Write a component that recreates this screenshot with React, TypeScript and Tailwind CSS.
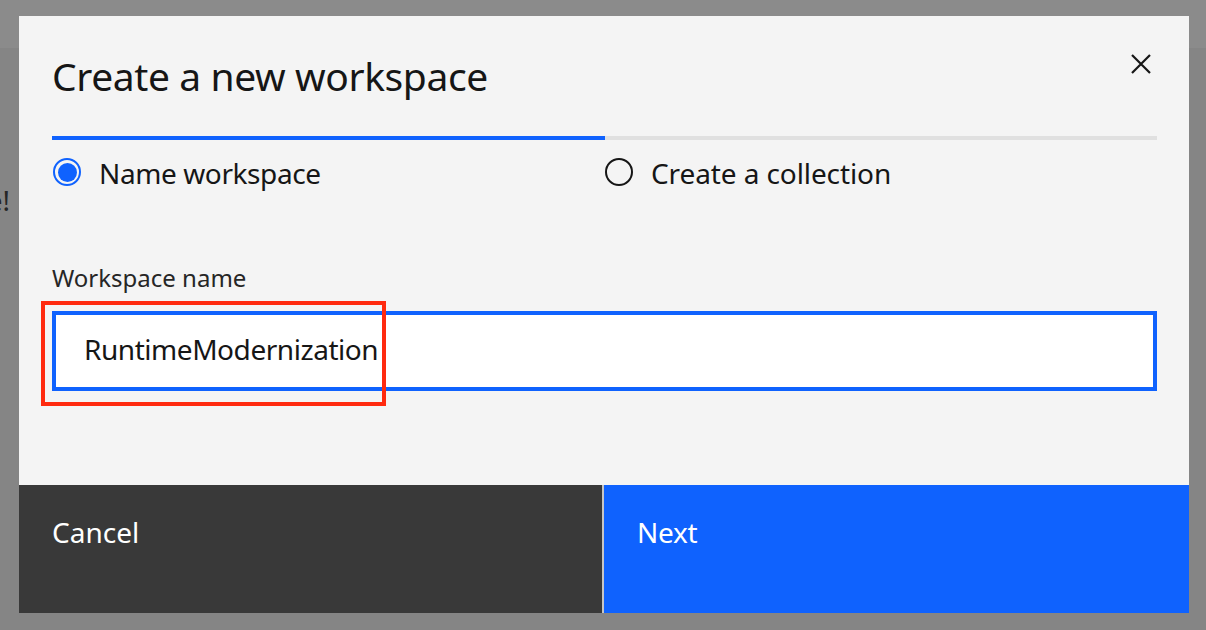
export default function App() {
  return (
    <div className="relative w-[1206px] h-[630px] overflow-hidden bg-[#858585] font-['Noto_Sans',sans-serif]">
      {/* page behind overlay */}
      <div className="h-12 bg-[#8b8b8b]" />
      <div className="flex">
        <div className="ml-[-120px] mt-[134px] w-[130px] text-right text-[28px] leading-[36px] text-[#262626]">
          ive!
        </div>
      </div>

      {/* modal */}
      <div className="absolute left-[19px] top-[16px] w-[1170px] h-[597px] bg-[#f4f4f4] flex flex-col text-[#161616]">
        <div className="relative pl-[33px] pr-[32px] pt-[36px]">
          <h2 className="text-[39px] leading-[48px] font-normal tracking-[-0.4px]">Create a new workspace</h2>
          <button className="absolute right-[38px] top-[38px] w-5 h-5 flex items-center justify-center">
            <svg width="20" height="20" viewBox="0 0 20 20" fill="none">
              <path d="M1 1 L19 19 M19 1 L1 19" stroke="#161616" strokeWidth="2.2" />
            </svg>
          </button>
        </div>

        <div className="pl-[33px] pr-[32px] mt-[36px] flex">
          <div className="flex-1 h-1 bg-[#0f62fe]" />
          <div className="flex-1 h-1 bg-[#e0e0e0]" />
        </div>

        <div className="pl-[34px] pr-[32px] mt-[17px] flex">
          <div className="flex-1 flex items-center gap-[18px]">
            <span className="w-[28px] h-[28px] rounded-full border-2 border-[#0f62fe] flex items-center justify-center">
              <span className="w-[19px] h-[19px] rounded-full bg-[#0f62fe]" />
            </span>
            <span className="text-[28px] leading-[28px] tracking-[-0.4px] pt-[2px]">Name workspace</span>
          </div>
          <div className="flex-1 flex items-center gap-[18px]">
            <span className="w-[28px] h-[28px] rounded-full border-2 border-[#161616]" />
            <span className="text-[28px] leading-[28px] tracking-[-0.1px] pt-[2px]">Create a collection</span>
          </div>
        </div>

        <div className="pl-[33px] pr-[32px] mt-[75px]">
          <div className="text-[24px] leading-[32px] text-[#262626]">Workspace name</div>
          <div className="relative mt-[17px]">
            <div className="h-[80px] border-4 border-[#0f62fe] bg-white flex items-center pl-[28px] pb-[4px] text-[28px] leading-[36px] tracking-[-0.45px]">
              RuntimeModernization
            </div>
            <div className="absolute left-[-11px] top-[-10px] w-[345px] h-[105px] border-4 border-[#ff2a0f]" />
          </div>
        </div>

        <div className="mt-auto h-[128px] flex bg-[#c6c6c6] gap-[2px]">
          <button className="w-[583px] bg-[#393939] text-white text-left pl-[33px] pt-[29px] self-stretch flex items-start text-[28px] leading-[36px]">
            Cancel
          </button>
          <button className="flex-1 bg-[#0f62fe] text-white text-left pl-[33px] pt-[29px] self-stretch flex items-start text-[28px] leading-[36px] tracking-[-0.3px]">
            Next
          </button>
        </div>
      </div>
    </div>
  );
}
